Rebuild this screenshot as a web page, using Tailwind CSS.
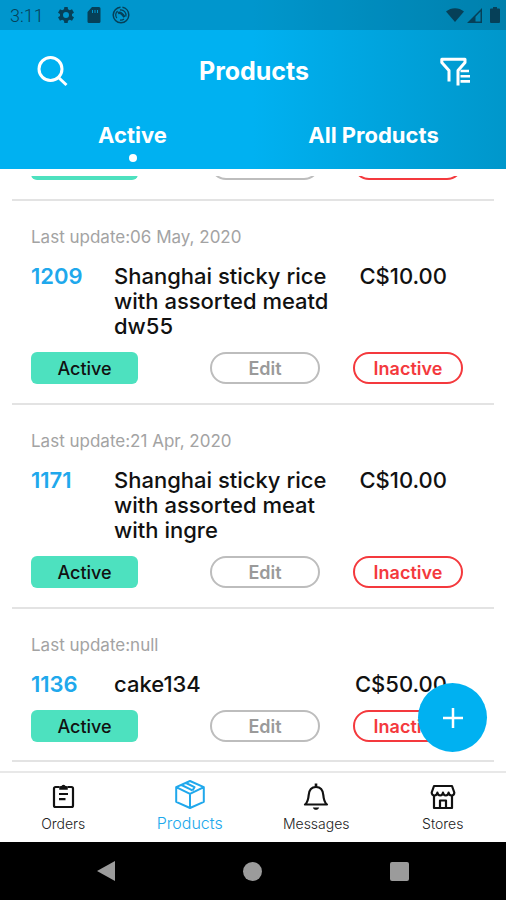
<!DOCTYPE html>
<html lang="en">
<head>
    <meta charset="UTF-8">
    <meta name="viewport" content="width=device-width, initial-scale=1.0">
    <script src="https://cdn.jsdelivr.net/npm/@tailwindcss/browser@4"></script>
    <title>Products</title>
</head>
<body class="font-[Inter,sans-serif] bg-white">
<div class="min-h-screen flex flex-col">

    <!-- Header -->
    <header class="bg-linear-to-r from-[#00b1f1] from-50% to-[#0097cb] text-white">
        <!-- Status bar -->
        <div class="h-[30px] px-[10px] flex items-center bg-black/15 text-[#064058]">
            <span class="font-[Roboto,sans-serif] text-[18px] font-light w-12">3:11</span>
            <svg class="w-4 h-4" viewBox="0 0 24 24" fill="currentColor" fill-rule="evenodd"><path d="M21 13.500v-3l3-2-3-5-3.200 1.500-2.800-1.700L14.500 0h-5L9 3.300 6.200 5 3 3.500l-3 5 3 2v3l-3 2 3 5L6.200 19 9 20.700l.5 3.300h5l.5-3.300 2.800-1.700 3.200 1.500 3-5zM12 7.500a4.500 4.500 0 1 1 0 9 4.500 4.500 0 0 1 0-9z"/></svg>
            <svg class="w-[14px] h-4 ml-[13px]" viewBox="0 0 14 16"><path fill="currentColor" fill-rule="evenodd" d="M5 0h7a1.500 1.500 0 0 1 1.500 1.500v13A1.500 1.500 0 0 1 12 16H2a1.500 1.500 0 0 1-1.500-1.500V5zM5 3v3h1V3zM7.500 3v3h1V3zM10 3v3h1V3z"/></svg>
            <svg class="w-[18px] h-[18px] ml-[11px]" viewBox="0 0 18 18" fill="none" stroke="currentColor"><circle cx="9" cy="9" r="7.800" stroke-width="1.500" stroke-dasharray="36 2"/><path d="M4.800 12.200A5.200 5.200 0 0 1 5.600 5M8 4a5.200 5.200 0 0 1 5.800 6.500M12 13a5.200 5.200 0 0 1-4 1" stroke-width="1.300"/><path d="M6 7.200c2-1.200 4 0 6.500 4" stroke-width="2.400"/></svg>
            <svg class="w-[18px] h-[14px] ml-auto" viewBox="0 0 18 14"><path fill="currentColor" d="M9 14L0 3.500C5-1 13-1 18 3.500z"/></svg>
            <svg class="w-[15px] h-[15px] ml-[3px]" viewBox="0 0 15 15"><path fill="currentColor" fill-rule="evenodd" d="M15 0v15H0zM13.500 3.500L8.500 8.700v4.800h5z"/></svg>
            <svg class="w-[10px] h-4 ml-2 -mr-1" viewBox="0 0 10 16"><path fill="currentColor" d="M3 0h4v1.500h2a1 1 0 0 1 1 1V15a1 1 0 0 1-1 1H1a1 1 0 0 1-1-1V2.500a1 1 0 0 1 1-1h2z"/></svg>
        </div>

        <div class="h-[84px] px-9 flex items-center justify-between">
            <button aria-label="Search">
                <svg class="w-8 h-8" viewBox="0 0 32 32" fill="none" stroke="currentColor" stroke-width="3"><circle cx="14.500" cy="13" r="11.500"/><path d="M22.500 21.500l8 7.500"/></svg>
            </button>
            <h1 class="text-[25px] font-bold">Products</h1>
            <button aria-label="Filter">
                <svg class="w-[30px] h-[30px]" viewBox="0 0 30 30" fill="none" stroke="currentColor" stroke-width="3" stroke-linejoin="round"><path d="M9 24.500V13.500L1.800 5.500V2.200H25V5.500L18 13.500V28.500"/><path d="M20.500 14H29M20.500 19.200h9.500M20.500 24.400h9.500" stroke-width="2.600"/></svg>
            </button>
        </div>

        <nav class="h-[55px] px-3 grid grid-cols-2 text-[22px] leading-[26px] font-bold">
            <a href="#" class="pt-2 flex flex-col items-center gap-[6px]">Active<span class="w-2 h-2 rounded-full bg-white"></span></a>
            <a href="#" class="pt-2 flex flex-col items-center">All Products</a>
        </nav>
    </header>

    <!-- Product list -->
    <main class="relative flex-1 pt-[7px] pb-2 overflow-hidden text-[22px] leading-[25px] text-[#111]">
        <!-- Row scrolled under the header -->
        <article class="h-[25px] mx-3 pl-[19px] pr-[31px] pb-[19px] border-b-2 border-[#e3e3e3] overflow-hidden flex items-end">
            <button aria-label="Active" class="w-[107px] h-8 shrink-0 rounded-md bg-[#4de1bf]"></button>
            <button aria-label="Edit" class="w-[110px] h-8 shrink-0 ml-auto rounded-full border-2 border-[#bdbdbd]"></button>
            <button aria-label="Inactive" class="w-[110px] h-8 shrink-0 ml-[33px] rounded-full border-2 border-[#f4393d]"></button>
        </article>

        <article class="mx-3 pl-[19px] pr-[31px] pt-[26px] pb-[19px] border-b-2 border-[#e3e3e3]">
            <p class="text-[17px] leading-5 text-[#a3a3a3]">Last update:06 May, 2020</p>
            <div class="mt-[17px] pr-4 flex font-medium">
                <span class="w-[83px] shrink-0 font-semibold text-[#20a8ec]">1209</span>
                <h2 class="w-[224px]">Shanghai sticky rice with assorted meatd dw55</h2>
                <span class="ml-auto">C$10.00</span>
            </div>
            <div class="mt-[13px] flex text-[18px]">
                <button class="w-[107px] h-8 rounded-md bg-[#4de1bf] font-medium">Active</button>
                <button class="w-[110px] h-8 ml-auto rounded-full border-2 border-[#bdbdbd] font-semibold text-[#9a9a9a]">Edit</button>
                <button class="w-[110px] h-8 ml-[33px] rounded-full border-2 border-[#f4393d] font-semibold text-[#f4393d]">Inactive</button>
            </div>
        </article>

        <article class="mx-3 pl-[19px] pr-[31px] pt-[26px] pb-[19px] border-b-2 border-[#e3e3e3]">
            <p class="text-[17px] leading-5 text-[#a3a3a3]">Last update:21 Apr, 2020</p>
            <div class="mt-[17px] pr-4 flex font-medium">
                <span class="w-[83px] shrink-0 font-semibold text-[#20a8ec]">1171</span>
                <h2 class="w-[224px]">Shanghai sticky rice with assorted meat with ingre</h2>
                <span class="ml-auto">C$10.00</span>
            </div>
            <div class="mt-[13px] flex text-[18px]">
                <button class="w-[107px] h-8 rounded-md bg-[#4de1bf] font-medium">Active</button>
                <button class="w-[110px] h-8 ml-auto rounded-full border-2 border-[#bdbdbd] font-semibold text-[#9a9a9a]">Edit</button>
                <button class="w-[110px] h-8 ml-[33px] rounded-full border-2 border-[#f4393d] font-semibold text-[#f4393d]">Inactive</button>
            </div>
        </article>

        <article class="mx-3 pl-[19px] pr-[31px] pt-[26px] pb-[18px] border-b-2 border-[#e3e3e3]">
            <p class="text-[17px] leading-5 text-[#a3a3a3]">Last update:null</p>
            <div class="mt-[17px] pr-4 flex font-medium">
                <span class="w-[83px] shrink-0 font-semibold text-[#20a8ec]">1136</span>
                <h2 class="w-[224px]">cake134</h2>
                <span class="ml-auto">C$50.00</span>
            </div>
            <div class="mt-[13px] flex text-[18px]">
                <button class="w-[107px] h-8 rounded-md bg-[#4de1bf] font-medium">Active</button>
                <button class="w-[110px] h-8 ml-auto rounded-full border-2 border-[#bdbdbd] font-semibold text-[#9a9a9a]">Edit</button>
                <button class="w-[110px] h-8 ml-[33px] rounded-full border-2 border-[#f4393d] font-semibold text-[#f4393d]">Inactive</button>
            </div>
        </article>

        <!-- Add button -->
        <button aria-label="Add product" class="absolute right-[19px] bottom-[19px] w-[69px] h-[69px] rounded-full bg-[#00b1f1] text-white flex items-center justify-center">
            <svg class="w-5 h-5" viewBox="0 0 20 20" stroke="currentColor" stroke-width="2.500"><path d="M10 0v20M0 10h20"/></svg>
        </button>
    </main>

    <!-- Tab bar -->
    <nav class="h-[71px] border-t-2 border-[#e8e8e8] grid grid-cols-4 text-[14px] leading-5 font-light text-[#222]">
        <a href="#" class="pt-[10px] flex flex-col items-center gap-[3px]">
            <svg class="w-7 h-7" viewBox="0 0 28 28" fill="none" stroke="#111" stroke-width="2.200"><path d="M10.500 4H6.500A1.500 1.500 0 0 0 5 5.500V22.500A1.500 1.500 0 0 0 6.500 24h16a1.500 1.500 0 0 0 1.500-1.500V5.500A1.500 1.500 0 0 0 22.500 4h-4"/><path d="M11 6V4l2-.5a1.600 1.600 0 0 1 3 0L18 4v2z" fill="#111" stroke-width="1.500"/><path d="M10 11h9M10 16.200h6.500"/></svg>
            Orders
        </a>
        <a href="#" class="pt-[6px] flex flex-col items-center gap-1 text-[16px] text-[#20a8ec]">
            <svg class="w-[30px] h-[30px]" viewBox="0 0 30 30" fill="none" stroke="#20a8ec" stroke-width="2" stroke-linejoin="round"><path d="M15 2L28.800 8.200V22.800L15 29 1.200 22.800V8.200zM1.200 8.200L15 14.800 28.800 8.200M15 14.800V29M11 4l8.500 4.200-2 3.300M6.500 6l8.500 4.200 2.500 1.300"/></svg>
            Products
        </a>
        <a href="#" class="pt-[10px] flex flex-col items-center gap-[3px]">
            <svg class="w-7 h-7" viewBox="0 0 28 28" fill="none" stroke="#111" stroke-width="2.200" stroke-linejoin="round"><path d="M3 21.500h22c-2.600-2-3.300-4.500-3.700-9.500-.4-5-3-8-7.300-8S7.100 7 6.700 12c-.4 5-1.100 7.500-3.700 9.500z"/><path d="M14 .500v3.500" stroke-width="2.600"/><path d="M10.800 24.500h6.400c-.6 1.500-1.800 2.300-3.200 2.300s-2.600-.8-3.200-2.300z" fill="#111" stroke="none"/></svg>
            Messages
        </a>
        <a href="#" class="pt-[10px] flex flex-col items-center gap-[3px]">
            <svg class="w-7 h-7" viewBox="0 0 28 28" fill="none" stroke="#111" stroke-width="2.200" stroke-linejoin="round"><path d="M5 3h18l2.300 6.500c0 1.800-1.200 3-2.800 3s-2.700-1-2.900-2.800c-.2 1.800-1.300 2.800-2.800 2.800s-2.600-1-2.800-2.800c-.2 1.800-1.300 2.800-2.800 2.800s-2.600-1-2.800-2.800c-.2 1.800-1.300 2.800-2.900 2.800s-2.800-1.200-2.800-3z"/><path d="M5 12.500V25h18V12.500M11 25v-7.500h6V25"/></svg>
            Stores
        </a>
    </nav>

    <!-- System navigation -->
    <div class="h-[58px] bg-black text-[#9b9b9b] px-[81px] grid grid-cols-3 items-center">
        <button aria-label="Back" class="pl-4"><svg class="w-[18px] h-[22px]" viewBox="0 0 18 22"><path fill="currentColor" d="M18 1v20L0 11z"/></svg></button>
        <button aria-label="Home" class="justify-self-center w-[19px] h-[19px] rounded-full bg-[#9b9b9b]"></button>
        <button aria-label="Recent apps" class="justify-self-end mr-4 w-[19px] h-[19px] rounded-xs bg-[#9b9b9b]"></button>
    </div>
</div>
</body>
</html>
